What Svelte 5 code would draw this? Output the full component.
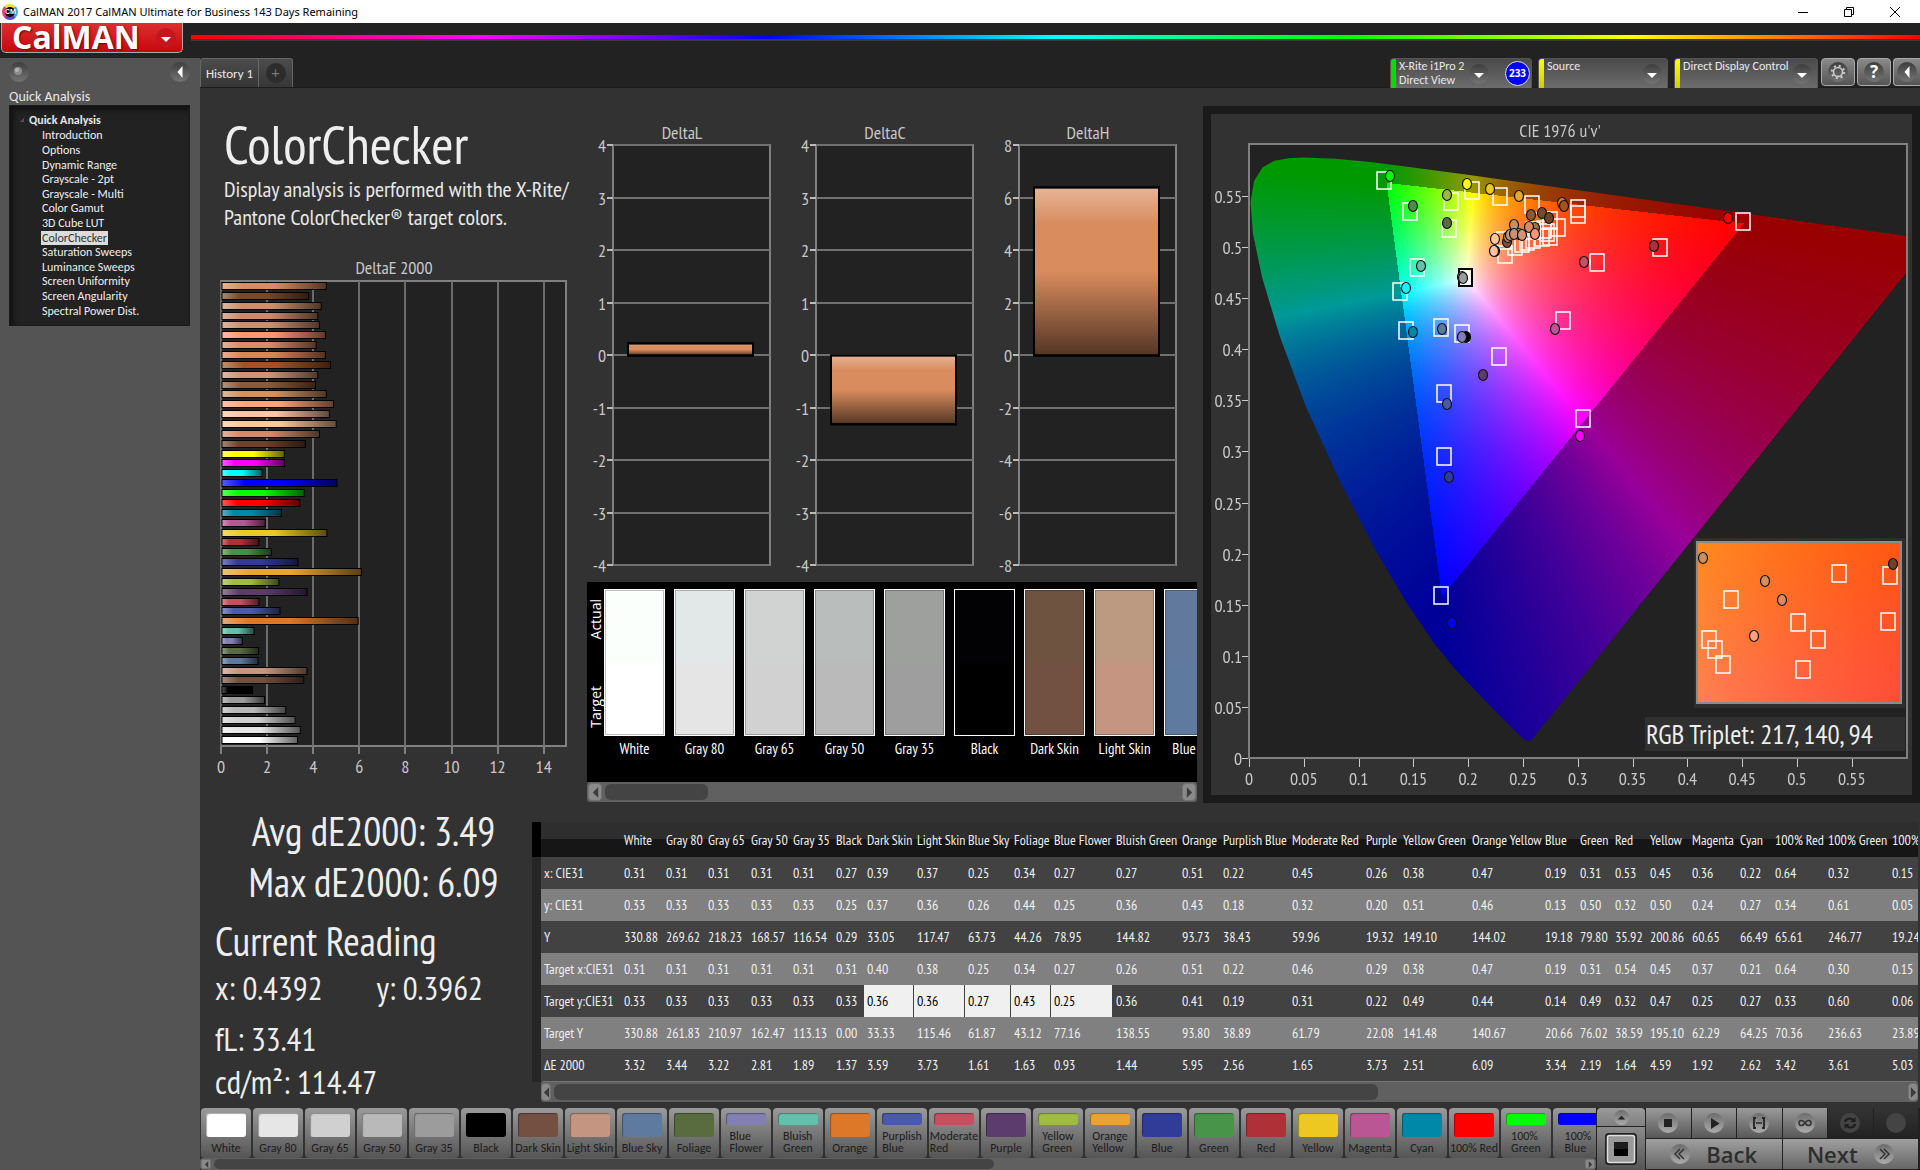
<script>
  import { onMount } from 'svelte';

  const pages = ['Introduction', 'Options', 'Dynamic Range', 'Grayscale - 2pt', 'Grayscale - Multi', 'Color Gamut', '3D Cube LUT', 'ColorChecker', 'Saturation Sweeps', 'Luminance Sweeps', 'Screen Uniformity', 'Screen Angularity', 'Spectral Power Dist.'];

  // DeltaE 2000 per patch, top to bottom: [value, colour]
  const deltaE = [
    [4.57, '#d98c5e'], [3.8, '#7a4a28'], [4.35, '#cc9068'], [4.2, '#cc8a6a'], [4.27, '#cd8f6e'], [4.53, '#ff9673'],
    [4.13, '#d88c6c'], [4.53, '#db8459'], [4.75, '#a2531f'], [4.2, '#d09474'], [4.1, '#8e5a34'], [4.57, '#cf9260'],
    [4.88, '#ffa47a'], [4.7, '#ffc3a5'], [5.0, '#ffc896'], [4.27, '#d08c66'], [3.66, '#70422a'], [2.75, '#ffff00'],
    [2.75, '#ff00ff'], [1.78, '#00ffff'], [5.03, '#0000ff'], [3.61, '#00ff00'], [3.42, '#ff0000'], [2.62, '#0088a8'],
    [1.92, '#bb5695'], [4.59, '#ecc820'], [1.64, '#b03038'], [2.19, '#489048'], [3.34, '#303c98'], [6.09, '#e8a430'],
    [2.51, '#a0bc40'], [3.73, '#5c3c6c'], [1.65, '#c45060'], [2.56, '#4a5ba5'], [5.95, '#dc7828'], [1.44, '#64c0aa'],
    [0.93, '#827fb3'], [1.63, '#586c40'], [1.61, '#5c7a9f'], [3.73, '#c69680'], [3.59, '#745040'], [1.37, '#000000'],
    [1.89, '#9c9c9c'], [2.81, '#b8b8b8'], [3.22, '#d0d0d0'], [3.44, '#e6e6e6'], [3.32, '#ffffff']
  ];

  const deltas = [
    { name: 'DeltaL', max: 4, value: 0.23 },
    { name: 'DeltaC', max: 4, value: -1.31 },
    { name: 'DeltaH', max: 8, value: 6.4 }
  ];

  const strips = [
    ['White', '#fbfffb', '#ffffff'], ['Gray 80', '#e2e8e8', '#e5e5e5'], ['Gray 65', '#d0d3d1', '#d1d1d1'],
    ['Gray 50', '#b9bdbb', '#bababa'], ['Gray 35', '#9ea09e', '#9e9e9e'], ['Black', '#020204', '#000000'],
    ['Dark Skin', '#6d5340', '#735142'], ['Light Skin', '#bc9a82', '#c49682'], ['Blue Sky', '#61799d', '#5e7a9e']
  ];

  const widths = [80, 42, 42, 43, 42, 43, 31, 50, 51, 46, 40, 62, 66, 41, 69, 74, 37, 69, 73, 35, 35, 35, 42, 48, 35, 53, 64, 60];
  const heads = ['White', 'Gray 80', 'Gray 65', 'Gray 50', 'Gray 35', 'Black', 'Dark Skin', 'Light Skin', 'Blue Sky', 'Foliage', 'Blue Flower', 'Bluish Green', 'Orange', 'Purplish Blue', 'Moderate Red', 'Purple', 'Yellow Green', 'Orange Yellow', 'Blue', 'Green', 'Red', 'Yellow', 'Magenta', 'Cyan', '100% Red', '100% Green', '100% Blue'];
  const rows = [
    ['x: CIE31', '0.31 0.31 0.31 0.31 0.31 0.27 0.39 0.37 0.25 0.34 0.27 0.27 0.51 0.22 0.45 0.26 0.38 0.47 0.19 0.31 0.53 0.45 0.36 0.22 0.64 0.32 0.15'],
    ['y: CIE31', '0.33 0.33 0.33 0.33 0.33 0.25 0.37 0.36 0.26 0.44 0.25 0.36 0.43 0.18 0.32 0.20 0.51 0.46 0.13 0.50 0.32 0.50 0.24 0.27 0.34 0.61 0.05'],
    ['Y', '330.88 269.62 218.23 168.57 116.54 0.29 33.05 117.47 63.73 44.26 78.95 144.82 93.73 38.43 59.96 19.32 149.10 144.02 19.18 79.80 35.92 200.86 60.65 66.49 65.61 246.77 19.24'],
    ['Target x:CIE31', '0.31 0.31 0.31 0.31 0.31 0.31 0.40 0.38 0.25 0.34 0.27 0.26 0.51 0.22 0.46 0.29 0.38 0.47 0.19 0.31 0.54 0.45 0.37 0.21 0.64 0.30 0.15'],
    ['Target y:CIE31', '0.33 0.33 0.33 0.33 0.33 0.33 0.36 0.36 0.27 0.43 0.25 0.36 0.41 0.19 0.31 0.22 0.49 0.44 0.14 0.49 0.32 0.47 0.25 0.27 0.33 0.60 0.06'],
    ['Target Y', '330.88 261.83 210.97 162.47 113.13 0.00 33.33 115.46 61.87 43.12 77.16 138.55 93.80 38.89 61.79 22.08 141.48 140.67 20.66 76.02 38.59 195.10 62.29 64.25 70.36 236.63 23.89'],
    ['ΔE 2000', '3.32 3.44 3.22 2.81 1.89 1.37 3.59 3.73 1.61 1.63 0.93 1.44 5.95 2.56 1.65 3.73 2.51 6.09 3.34 2.19 1.64 4.59 1.92 2.62 3.42 3.61 5.03']
  ].map(([label, text]) => ({ label, cells: text.split(' ') }));

  const patches = [
    ['White', '#ffffff'], ['Gray 80', '#e6e6e6'], ['Gray 65', '#d0d0d0'], ['Gray 50', '#b9b9b9'], ['Gray 35', '#9c9c9c'],
    ['Black', '#000000'], ['Dark Skin', '#735042'], ['Light Skin', '#c49682'], ['Blue Sky', '#5e7a9e'], ['Foliage', '#586c40'],
    ['Blue Flower', '#827fb3', 2], ['Bluish Green', '#64c0aa', 2], ['Orange', '#dc7828'], ['Purplish Blue', '#4a5ba5', 2],
    ['Moderate Red', '#c45060', 2], ['Purple', '#5c3c6c'], ['Yellow Green', '#a0bc40', 2], ['Orange Yellow', '#e8a430', 2],
    ['Blue', '#303c98'], ['Green', '#489448'], ['Red', '#b03038'], ['Yellow', '#ecc820'], ['Magenta', '#bb5695'],
    ['Cyan', '#0088a8'], ['100% Red', '#ff0000'], ['100% Green', '#00ff00', 2], ['100% Blue', '#0000ff', 2]
  ];

  // Chromaticity chart geometry: plot origin and pixels per u', v' unit
  const W = 701, H = 680, L = 38, T = 30, PW = 658, PH = 614;
  const SX = PW / 0.6, SY = PH / 0.6;
  const inset = { x: 486, y: 428, w: 204, h: 161, u0: 0.2425, u1: 0.279, v0: 0.4975, v1: 0.529 };
  const locus = [[.2569, .0165], [.2522, .0169], [.2461, .0226], [.2347, .035], [.2161, .0549], [.1877, .0871], [.169, .1119], [.1441, .151], [.1147, .2044], [.0828, .2708], [.0521, .3427], [.0282, .4117], [.0119, .4698], [.0035, .5131], [.0014, .5432], [.0046, .5638], [.0123, .577], [.0231, .5837], [.036, .5861], [.0501, .5868], [.0792, .5856], [.1127, .5821], [.1531, .5766], [.2026, .5694], [.2623, .5604], [.3315, .5501], [.4035, .5393], [.4692, .5296], [.5203, .5219], [.5565, .5165], [.583, .5125], [.6234, .5065]];

  const targets = [[135, 36], [223, 46], [202, 57], [251, 52], [161, 67], [200, 84], [283, 60], [329, 64], [329, 70], [494, 77], [411, 103], [348, 118], [168, 123], [151, 147], [157, 186], [192, 183], [213, 189], [314, 176], [250, 212], [195, 249], [195, 312], [334, 274], [192, 451],
    [301, 76], [309, 83], [301, 92], [295, 85], [298, 88], [293, 93], [284, 86], [284, 95], [278, 97], [273, 99], [266, 102], [256, 110], [255, 96]];
  const readings = [[141, 32, '#00ff00'], [218, 40, '#ffff00'], [241, 45, '#ecc820'], [270, 52, '#e8a430'], [198, 51, '#9cb840'], [164, 62, '#489048'], [198, 79, '#586c40'], [172, 122, '#64c0aa'], [157, 144, '#00ffff'], [164, 188, '#0088a8'], [193, 185, '#5c7a9f'], [217, 193, '#000000'], [213, 193, '#827fb3'], [306, 185, '#bb5695'], [234, 231, '#5c3c6c'], [198, 260, '#4a5ba5'], [200, 333, '#303c98'], [331, 292, '#ff00ff'], [335, 118, '#c45060'], [405, 102, '#b03038'], [479, 74, '#ff0000'], [203, 479, '#0000ff'], [213, 133, '#b9b9b9'], [214, 134, '#9c9c9c'],
    [282, 71, '#8e5a34'], [293, 69, '#7a4a28'], [300, 74, '#70422a'], [313, 59, '#dc7828'], [315, 62, '#a2531f'], [265, 81, '#c89060'], [286, 84, '#a8704c'], [280, 83, '#db8c5e'], [286, 90, '#ff9673'], [246, 95, '#ffc896'], [246, 107, '#c49682'], [245, 107, '#ffc3a5'], [258, 98, '#745042'], [259, 93, '#c08860'], [261, 91, '#c49682'], [270, 90, '#cc8a6a'], [265, 90, '#cd8f6e'], [273, 91, '#d09474']];
  const insetTargets = [[142, 31], [193, 33], [34, 57], [101, 80], [121, 97], [191, 79], [12, 97], [18, 107], [26, 122], [106, 127]];
  const insetReadings = [[6, 16, '#c89060'], [68, 39, '#d09060'], [85, 58, '#d98c5e'], [57, 94, '#ffa080'], [196, 22, '#70422a']];

  function rgb(u, v, level) {
    const d = 6 * u - 16 * v + 12;
    const x = (9 * u) / d, y = (4 * v) / d;
    const X = x / y, Z = (1 - x - y) / y;
    const c = [3.2406 * X - 1.5372 - 0.4986 * Z, -0.9689 * X + 1.8758 + 0.0415 * Z, 0.0557 * X - 0.204 + 1.057 * Z];
    const inside = c.every((n) => n >= 0);
    const m = Math.max(...c);
    return c.map((n) => (Math.max(0, n) / m) * 255 * (inside ? 1 : level));
  }

  let canvas;
  onMount(() => {
    const ctx = canvas.getContext('2d');
    const fill = (w, h, toUv) => {
      const buf = document.createElement('canvas');
      buf.width = w;
      buf.height = h;
      const b = buf.getContext('2d');
      const img = b.createImageData(w, h);
      for (let j = 0; j < h; j++)
        for (let i = 0; i < w; i++) {
          const [u, v] = toUv(i, j);
          const c = rgb(u, Math.max(v, 0.001), 0.6);
          const k = (j * w + i) * 4;
          img.data[k] = c[0];
          img.data[k + 1] = c[1];
          img.data[k + 2] = c[2];
          img.data[k + 3] = 255;
        }
      b.putImageData(img, 0, 0);
      return buf;
    };
    ctx.save();
    ctx.beginPath();
    ctx.rect(L, T, PW, PH);
    ctx.clip();
    ctx.beginPath();
    locus.forEach(([u, v], i) => {
      const x = L + u * SX, y = T + PH - v * SY;
      if (i) ctx.lineTo(x, y);
      else ctx.moveTo(x, y);
    });
    ctx.closePath();
    ctx.clip();
    ctx.drawImage(fill(PW, PH, (i, j) => [i / SX, 0.6 - j / SY]), L, T);
    ctx.restore();
    const n = inset;
    ctx.fillStyle = '#2e2e2e';
    ctx.fillRect(n.x - 3, n.y - 4, n.w + 7, n.h + 9);
    ctx.drawImage(fill(n.w, n.h, (i, j) => [n.u0 + ((n.u1 - n.u0) * i) / n.w, n.v1 - ((n.v1 - n.v0) * j) / n.h]), n.x, n.y);
  });
</script>

{#snippet chevron(dir)}
  <svg class="knob" viewBox="0 0 20 20" aria-hidden="true">
    <circle cx="10" cy="10" r="10" fill="url(#knob)" />
    {#if dir === 'down'}<path d="M5 9h10l-5 5z" fill="#fff" />{:else}<path d="M12.500 4v12L7.500 10z" fill="#fff" />{/if}
  </svg>
{/snippet}

{#snippet scrollbar(kind)}
  <div class="scroll {kind}">
    <button class="arrow" aria-label="Scroll left"><svg viewBox="0 0 8 12"><path d="M7 0v12L1 6z" fill="#3c3c3c" /></svg></button>
    <div class="track"><div class="thumb"></div></div>
    <button class="arrow" aria-label="Scroll right"><svg viewBox="0 0 8 12"><path d="M1 0v12l6-6z" fill="#3c3c3c" /></svg></button>
  </div>
{/snippet}

<svg class="defs" width="0" height="0" aria-hidden="true">
  <defs>
    <linearGradient id="knob" x1="0" y1="0" x2="0" y2="1"><stop offset="0" stop-color="#3e3e3e" /><stop offset="1" stop-color="#747474" /></linearGradient>
    <linearGradient id="knobLight" x1="0" y1="0" x2="0" y2="1"><stop offset="0" stop-color="#6c6c6c" /><stop offset="1" stop-color="#acacac" /></linearGradient>
    <linearGradient id="shadeX"><stop offset="0" stop-color="#fff" stop-opacity=".35" /><stop offset=".2" stop-color="#fff" stop-opacity="0" /><stop offset=".5" stop-color="#000" stop-opacity="0" /><stop offset="1" stop-color="#000" stop-opacity=".62" /></linearGradient>
    <linearGradient id="shadeY" x1="0" y1="0" x2="0" y2="1"><stop offset="0" stop-color="#fff" stop-opacity=".35" /><stop offset=".22" stop-color="#fff" stop-opacity="0" /><stop offset=".5" stop-color="#000" stop-opacity="0" /><stop offset="1" stop-color="#000" stop-opacity=".62" /></linearGradient>
  </defs>
</svg>

<div class="app">
  <header class="titlebar">
    <div class="badge">CM</div>
    <span>CalMAN 2017 CalMAN Ultimate for Business 143 Days Remaining</span>
    <div class="winctl">
      <button aria-label="Minimize"><svg viewBox="0 0 12 12"><path d="M1 6.500h10" /></svg></button>
      <button aria-label="Restore"><svg viewBox="0 0 12 12"><path d="M1.500 3.500h7v7h-7zM3.500 3.500v-2h7v7h-2" /></svg></button>
      <button aria-label="Close"><svg viewBox="0 0 12 12"><path d="M1 1l10 10M11 1L1 11" /></svg></button>
    </div>
  </header>

  <div class="brandbar">
    <button class="logo"><span>CalMAN</span><svg viewBox="0 0 20 20" aria-hidden="true"><circle cx="10" cy="10" r="10" fill="#c4161c" /><path d="M5 9h10l-5 5z" fill="#fff" /></svg></button>
    <div class="rainbow"></div>
  </div>

  <div class="body">
    <aside>
      <div class="asidetop">
        <svg class="knob" viewBox="0 0 20 20" aria-hidden="true"><circle cx="10" cy="10" r="10" fill="url(#knob)" /><circle cx="9" cy="9" r="4" fill="#8c8c8c" /><circle cx="8" cy="8" r="2" fill="#b4b4b4" /></svg>
        <button class="plain" aria-label="Collapse">{@render chevron('left')}</button>
      </div>
      <h2>Quick Analysis</h2>
      <nav>
        <p><svg viewBox="0 0 6 6" aria-hidden="true"><path d="M5 1v4H1z" fill="#555" /></svg>Quick Analysis</p>
        <ul>
          {#each pages as page}
            <li><a href="#page" class:current={page === 'ColorChecker'}>{page}</a></li>
          {/each}
        </ul>
      </nav>
    </aside>

    <main>
      <div class="tabs">
        <button class="tab">History 1</button>
        <button class="tab add" aria-label="Add history"><span>+</span></button>
        <div class="devices">
          <button class="device meter"><i class="green"></i><span>X-Rite i1Pro 2<br />Direct View</span>{@render chevron('down')}<b>233</b></button>
          <button class="device source"><i></i><span>Source</span>{@render chevron('down')}</button>
          <button class="device display"><i></i><span>Direct Display Control</span>{@render chevron('down')}</button>
          <button class="tool" aria-label="Settings"><svg viewBox="0 0 20 20"><circle cx="10" cy="10" r="10" fill="url(#knob)" /><circle cx="10" cy="10" r="4.500" fill="none" stroke="#ccc" stroke-width="1.600" /><circle cx="10" cy="10" r="6.200" fill="none" stroke="#ccc" stroke-width="2" stroke-dasharray="2 2.870" /></svg></button>
          <button class="tool help" aria-label="Help"><span>?</span></button>
          <button class="tool last" aria-label="Collapse panel">{@render chevron('left')}</button>
        </div>
      </div>

      <div class="content">
        <section class="left">
          <h1>ColorChecker</h1>
          <p class="lead">Display analysis is performed with the X-Rite/<br />Pantone ColorChecker® target colors.</p>
          <svg class="chart" width="387" height="530" viewBox="0 0 387 530">
            <text x="194" y="24" text-anchor="middle">DeltaE 2000</text>
            <rect x="21" y="31" width="345" height="465" fill="#222" stroke="#808080" stroke-width="2" />
            {#each [0, 2, 4, 6, 8, 10, 12, 14] as t}
              <path d="M{Math.round(21 + t * 23.05)} 31V496" stroke="#6c6c6c" stroke-width="2" />
              <path d="M{Math.round(21 + t * 23.05)} 497v7" stroke="#ccc" />
              <text x={21 + t * 23.05} y="523" text-anchor="middle">{t}</text>
            {/each}
            {#each deltaE as [v, c], i}
              <rect x="22" y={32.5 + Math.round(i * 9.86)} width={v * 23.05 - 1} height="7" fill={c} />
              <rect x="22" y={32.5 + Math.round(i * 9.86)} width={v * 23.05 - 1} height="7" fill="url(#shadeX)" stroke="#000" />
            {/each}
          </svg>
        </section>

        <section class="mid">
          <div class="deltas">
            {#each deltas as d}
              <svg class="chart" width="203" height="462" viewBox="0 0 203 462">
                <text x="95" y="19" text-anchor="middle">{d.name}</text>
                <rect x="26" y="25" width="157" height="420" fill="#222" stroke="#808080" stroke-width="2" />
                {#each [4, 3, 2, 1, 0, -1, -2, -3, -4] as t}
                  <path d="M26 {Math.round(235 - t * 52.5)}H183" stroke="#707070" stroke-width="2" />
                  <path d="M20 {Math.round(235 - t * 52.5)}h6" stroke="#bbb" stroke-width="2" />
                  <text x="19" y={242 - t * 52.5} text-anchor="end">{(t * d.max) / 4}</text>
                {/each}
                {#each ['#d98c5e', 'url(#shadeY)'] as f}
                  <rect x="41" y={235.5 - (Math.max(d.value, 0) * 210) / d.max} width="125" height={(Math.abs(d.value) * 210) / d.max} fill={f} stroke="#000" stroke-width="2" />
                {/each}
              </svg>
            {/each}
          </div>
          <div class="strips">
            <div class="side"><span>Actual</span><span>Target</span></div>
            {#each strips as [name, actual, target]}
              <figure>
                <svg width="61" height="147" aria-hidden="true"><rect width="61" height="74" fill={actual} /><rect y="74" width="61" height="73" fill={target} /><rect x="1.500" y="1.500" width="58" height="144" fill="none" stroke="#000" stroke-opacity=".25" /><rect x=".5" y=".5" width="60" height="146" fill="none" stroke="#fff" /></svg>
                <figcaption>{name}</figcaption>
              </figure>
            {/each}
          </div>
          {@render scrollbar('stripbar')}
        </section>

        <section class="cie">
          <canvas bind:this={canvas} width={W} height={H}></canvas>
          <svg class="chart" width={W} height={H} viewBox="0 0 {W} {H}">
            <text x="349" y="23" text-anchor="middle">CIE 1976 u'v'</text>
            <rect x={L} y={T} width={PW} height={PH} fill="none" stroke="#808080" stroke-width="2" />
            {#each Array.from({ length: 12 }, (_, i) => i) as i}
              <path d="M{L - 7} {Math.round(T + PH - i * 51.1) + 0.5}h6M{Math.round(L + i * 54.8) + 0.5} {T + PH + 1}v8" stroke="#ccc" />
              <text x={L - 7} y={T + PH + 7 - i * 51.1} text-anchor="end">{+(i * 0.05).toFixed(2)}</text>
              <text x={L + i * 54.8} y="671" text-anchor="middle">{+(i * 0.05).toFixed(2)}</text>
            {/each}
            <g transform="translate({L} {T})">
              {#each targets as [x, y]}<rect class="target" x={x - 7} y={y - 8} width="14" height="17" />{/each}
              <rect class="target white" x="210" y="125" width="13" height="17" />
              {#each readings as [x, y, c]}<ellipse cx={x} cy={y} rx="4.500" ry="5.500" fill={c} stroke="#111" stroke-width="1.200" />{/each}
            </g>
            <rect x={inset.x} y={inset.y} width={inset.w} height={inset.h} fill="none" stroke="#8c8c8c" stroke-width="2" />
            <g transform="translate({inset.x} {inset.y})">
              {#each insetTargets as [x, y]}<rect class="target" x={x - 7} y={y - 8} width="14" height="17" />{/each}
              {#each insetReadings as [x, y, c]}<ellipse cx={x} cy={y} rx="4.500" ry="5.500" fill={c} stroke="#111" stroke-width="1.200" />{/each}
            </g>
            <rect x="434" y="603" width="260" height="34" fill="#303030" />
            <text class="triplet" x="435" y="630">RGB Triplet: 217, 140, 94</text>
          </svg>
        </section>
      </div>

      <div class="lower">
        <section class="stats">
          <p class="big">Avg dE2000: 3.49</p>
          <p class="big">Max dE2000: 6.09</p>
          <p class="reading">Current Reading</p>
          <p class="xy"><span>x: 0.4392</span><span>y: 0.3962</span></p>
          <p class="fl">fL: 33.41</p>
          <p class="cd">cd/m²: 114.47</p>
        </section>
        <section class="grid">
          <div class="rowheads"></div>
          <div class="tablebox">
            <div class="clip">
              <table>
                <colgroup>{#each widths as w}<col style="width:{w}px" />{/each}</colgroup>
                <thead><tr><th></th>{#each heads as h}<th scope="col">{h}</th>{/each}</tr></thead>
                <tbody>
                  {#each rows as row, r}
                    <tr><th scope="row">{row.label}</th>{#each row.cells as cell, i}<td class:sel={r === 4 && i > 5 && i < 11}>{cell}</td>{/each}</tr>
                  {/each}
                </tbody>
              </table>
            </div>
            {@render scrollbar('tablebar')}
          </div>
        </section>
      </div>

      <footer>
        <div class="palette">
          <div class="patches">
            {#each patches as [name, color, lines]}
              <button class="patch" class:two={lines === 2}><i style="background:{color}"></i><span>{name}</span></button>
            {/each}
          </div>
          {@render scrollbar('patchbar')}
        </div>
        <div class="window">
          <button aria-label="Expand"><svg viewBox="0 0 16 16"><circle cx="8" cy="8" r="8" fill="url(#knobLight)" /><path d="M4 10h8L8 6z" fill="#222" /></svg></button>
          <button class="rec" aria-label="Pattern window"><svg viewBox="0 0 32 32"><rect width="32" height="32" rx="4" fill="#222" /><rect x="2.500" y="2.500" width="27" height="27" rx="2" fill="#999" stroke="#e0e0e0" stroke-width="1.500" /><rect x="9" y="9" width="14" height="14" fill="#000" /><rect x="9" y="9" width="14" height="7" fill="#1c1c1c" /></svg></button>
        </div>
        <div class="transport">
          <div class="keys">
            <button aria-label="Stop"><svg viewBox="0 0 20 20"><circle cx="10" cy="10" r="10" fill="url(#knobLight)" /><path d="M6 6h8v8H6z" fill="#222" /></svg></button>
            <button aria-label="Play"><svg viewBox="0 0 20 20"><circle cx="10" cy="10" r="10" fill="url(#knobLight)" /><path d="M7 5l8.500 5.500L7 16z" fill="#222" /></svg></button>
            <button aria-label="Read range"><svg viewBox="0 0 20 20"><circle cx="10" cy="10" r="10" fill="url(#knobLight)" /><path d="M7 5H5v10h2M13 5h2v10h-2" fill="none" stroke="#222" stroke-width="1.800" /><path d="M7.200 9h1.400v2H7.200zM9.300 9h1.400v2H9.300zM11.400 9h1.400v2h-1.400z" fill="#222" /></svg></button>
            <button aria-label="Continuous"><svg viewBox="0 0 20 20"><circle cx="10" cy="10" r="10" fill="url(#knobLight)" /><path d="M10 10C8 7 4 6.500 4 10s4 3 6 0 6-3.500 6 0-4 3-6 0z" fill="none" stroke="#333" stroke-width="1.600" /></svg></button>
            <button class="off" aria-label="Refresh"><svg viewBox="0 0 20 20"><circle cx="10" cy="10" r="10" fill="#444" /><path d="M5 9c.5-3 5-5 8-2M15 11c-.5 3-5 5-8 2" fill="none" stroke="#1c1c1c" stroke-width="2.200" /><path d="M15.500 4v5h-5zM4.500 16v-5h5z" fill="#1c1c1c" /></svg></button>
            <button class="off" aria-label="Record"><svg viewBox="0 0 20 20"><circle cx="10" cy="10" r="10" fill="#444" /></svg></button>
          </div>
          <div class="nav">
            <button><svg viewBox="0 0 20 20" aria-hidden="true"><circle cx="10" cy="10" r="10" fill="url(#knobLight)" /><path d="M10 5l-5 5 5 5M14 5l-5 5 5 5" fill="none" stroke="#333" stroke-width="1.500" /></svg>Back</button>
            <button>Next<svg viewBox="0 0 20 20" aria-hidden="true"><circle cx="10" cy="10" r="10" fill="url(#knobLight)" /><path d="M6 5l5 5-5 5M10 5l5 5-5 5" fill="none" stroke="#333" stroke-width="1.500" /></svg></button>
          </div>
        </div>
      </footer>
    </main>
  </div>
</div>

<style>
  :global(body) { margin: 0; background: #222; }
  .app { --ui: Carlito, Calibri, Lato, sans-serif; --cond: 'PT Sans Narrow', 'Roboto Condensed', Carlito, sans-serif; min-height: 100vh; display: flex; flex-direction: column; background: #222; color: #e8e8e8; font-family: var(--ui); font-size: 12px; overflow: hidden; }
  .defs { position: absolute; }
  button { border: 0; padding: 0; margin: 0; background: none; font: inherit; color: inherit; }
  h1, h2, p, ul, figure { margin: 0; padding: 0; font-weight: 400; }
  .titlebar { height: 23px; background: #fff; color: #000; display: flex; align-items: center; gap: 5px; padding-left: 2px; font: 11px/23px 'Noto Sans', 'Open Sans', sans-serif; }
  .badge { width: 10px; height: 10px; border: 3px solid; border-color: #e8e040 #40b0e0 #7040d0 #e04080; border-radius: 50%; background: #000; color: #fff; font: 700 7px/10px 'Liberation Sans', sans-serif; text-align: center; }
  .winctl { margin-left: auto; display: flex; gap: 34px; padding-right: 19px; }
  .winctl svg { width: 12px; height: 12px; display: block; fill: none; stroke: #000; }
  .brandbar { height: 35px; display: flex; gap: 8px; }
  .logo { width: 182px; height: 30px; box-sizing: border-box; border: 1px solid #aaa; border-top: 0; border-radius: 0 0 5px 5px; background: linear-gradient(#dc3030, #c8060c); display: flex; align-items: center; padding-left: 10px; color: #fff; font: 700 32px/28px 'Open Sans', Lato, sans-serif; text-shadow: 1px 1px 2px #600; margin-left: 1px; }
  .logo span { height: 30px; line-height: 28px; }
  .logo svg { width: 20px; height: 20px; margin-left: auto; margin-right: 6px; }
  .rainbow { flex: 1; height: 4px; margin-top: 12px; border-bottom: 2px solid #3a3a3a; background: linear-gradient(90deg, #f00, #f0f, #00f, #0ff, #0f0, #ff0, #f00); }
  .body { flex: 1; display: flex; }
  aside { width: 200px; box-sizing: border-box; padding: 4px 10px 0 9px; background: #545454; }
  .asidetop { display: flex; justify-content: space-between; height: 20px; }
  .knob { width: 20px; height: 20px; display: block; flex: none; }
  h2 { font-size: 14px; line-height: 18px; padding-top: 6px; height: 17px; }
  nav { height: 221px; box-sizing: border-box; background: #222; border: 1px solid #1a1a1a; box-shadow: inset 3px 4px 5px #111; padding-top: 6px; }
  nav p { display: flex; align-items: center; gap: 4px; padding-left: 9px; font-weight: 700; line-height: 14px; height: 16px; }
  nav svg { width: 6px; height: 6px; }
  ul { list-style: none; display: grid; grid-auto-rows: 1fr; height: 190px; padding-left: 31px; }
  li { line-height: 14px; display: flex; align-items: center; }
  li a { color: #eee; text-decoration: none; padding: 0 1px; font-size: 12px; }
  li a.current { background: #dcdcdc; color: #333; }
  main { flex: 1; min-width: 0; background: #323232; display: flex; flex-direction: column; }
  .tabs { height: 30px; display: flex; background: #222; border-bottom: 1px solid #1c1c1c; box-sizing: border-box; }
  .tab { width: 59px; border: 1px solid #666; border-bottom: 0; background: linear-gradient(#4c4c4c, #363636); font-size: 13px; border-radius: 3px 0 0 0; white-space: nowrap; }
  .tab.add { width: 34px; border-left: 0; border-radius: 0 3px 0 0; }
  .tab.add span { display: inline-block; width: 20px; height: 20px; line-height: 20px; border-radius: 50%; background: #2c2c2c; color: #777; font-size: 16px; }
  .devices { margin-left: auto; display: flex; height: 30px; }
  .device { box-sizing: border-box; display: flex; align-items: center; margin-right: 6px; background: linear-gradient(#4a4a4a, #6c6c6c); border: 1px solid #555; border-bottom: 0; border-radius: 4px 4px 0 0; text-align: left; line-height: 14px; white-space: nowrap; overflow: hidden; }
  .device i { width: 5px; height: 30px; background: linear-gradient(#ff0, #cc0); margin-right: 3px; flex: none; }
  .device i.green { background: #00e000; }
  .device span { align-self: flex-start; flex: 1; }
  .meter { width: 142px; }
  .meter b { width: 25px; height: 25px; margin: 0 1px 0 16px; box-sizing: border-box; border: 1px solid #ddd; border-radius: 50%; background: #00f; font: 700 10px/23px 'Open Sans', sans-serif; text-align: center; color: #fff; }
  .source { width: 130px; padding-right: 5px; }
  .display { width: 144px; padding-right: 5px; margin-right: 3px; }
  .tool { width: 34px; height: 28px; box-sizing: border-box; margin-right: 2px; border: 1px solid #aaa; border-radius: 4px; background: linear-gradient(#8a8a8a, #555); display: grid; place-items: center; }
  .tool svg { width: 20px; height: 20px; }
  .tool.help span { width: 20px; height: 20px; border-radius: 50%; background: linear-gradient(#3e3e3e, #747474); font: 700 17px/20px 'Open Sans', sans-serif; color: #fff; }
  .tool.last { width: 27px; margin-right: 0; border-right: 0; border-radius: 4px 0 0 4px; }
  .content { display: flex; }
  .left { width: 387px; }
  h1 { font: 400 54px/56px var(--cond); padding: 28px 0 0 24px; color: #eee; }
  .lead { font: 22px/28px var(--cond); padding: 3px 0 0 24px; white-space: nowrap; margin-bottom: 19px; }
  .chart { display: block; font: 18px var(--cond); fill: none; }
  .chart text { fill: #c8c8c8; }
  .mid { width: 610px; padding-top: 32px; }
  .deltas { display: flex; }
  .strips { height: 200px; box-sizing: border-box; padding-top: 7px; background: #000; display: flex; gap: 9px; overflow: hidden; }
  .side { width: 17px; height: 147px; margin-right: -9px; display: flex; flex-direction: column; justify-content: space-between; padding: 10px 0 8px; box-sizing: border-box; flex: none; }
  .side span { writing-mode: vertical-rl; transform: rotate(180deg); font: 14px/17px 'Open Sans', sans-serif; color: #fff; }
  .strips figure { width: 61px; flex: none; display: flex; flex-direction: column; align-items: center; }
  figcaption { font: 15px/25px var(--cond); white-space: nowrap; color: #fff; }
  .scroll { display: flex; align-items: stretch; background: #606060; box-sizing: border-box; border-radius: 3px; gap: 3px; }
  .arrow { width: 14px; flex: none; border: 1px solid #727272; border-radius: 4px; background: #8a8a8a; display: grid; place-items: center; }
  .arrow svg { width: 7px; height: 11px; display: block; }
  .track { flex: 1; padding: 1px 0; display: flex; }
  .thumb { background: #444; border-radius: 6px; }
  .stripbar { height: 20px; padding: 1px; }
  .stripbar .thumb { width: 18%; }
  .tablebar { height: 21px; padding: 1px 0; border-top: 1px solid #757575; }
  .tablebar .arrow { width: 10px; }
  .tablebar .thumb { width: 61%; }
  .patchbar { height: 12px; padding: 1px; }
  .patchbar .arrow { width: 10px; border-radius: 2px; }
  .patchbar .track { padding: 0; }
  .patchbar .thumb { width: 57%; }
  .patchbar svg { height: 7px; }
  .cie { margin: 18px 0 0 6px; flex: 1; box-sizing: border-box; height: 697px; border: 8px solid #1a1a1a; background: #323232; display: grid; overflow: hidden; }
  .cie > * { grid-area: 1 / 1; }
  .cie canvas { display: block; background: linear-gradient(#222, #222) 38px 30px / 658px 614px no-repeat; }
  .target { stroke: #fff; stroke-width: 1.500; fill: none; }
  .target.white { stroke: #000; stroke-width: 2; fill: #ffffff80; }
  .chart .triplet { font-size: 27px; fill: #eee; }
  .lower { display: flex; margin-top: auto; }
  .stats { width: 332px; flex: none; font: 33px/40px var(--cond); box-sizing: border-box; padding-left: 15px; height: 296px; margin-top: -16px; color: #eee; }
  .stats .big { font-size: 40px; line-height: 51px; text-align: center; }
  .stats .reading { font-size: 40px; line-height: 50px; margin-top: 8px; }
  .xy { display: flex; gap: 54px; line-height: 44px; }
  .fl { margin-top: 9px; }
  .cd { margin-top: 3px; }
  .grid { flex: 1; min-width: 0; display: flex; padding-right: 2px; }
  .rowheads { width: 9px; background: linear-gradient(#000 35px, #262626 35px); height: 260px; }
  .tablebox { flex: 1; min-width: 0; }
  .clip { overflow: hidden; }
  table { table-layout: fixed; width: 1383px; border-collapse: collapse; font: 14px/20px var(--cond); white-space: nowrap; color: #f0f0f0; }
  thead tr { height: 35px; background: linear-gradient(#2e2e2e 50%, #161616 50%); }
  tbody tr { height: 32px; background: #424242; }
  tbody tr:nth-child(even) { background: #808080; }
  th, td { padding: 0 0 0 3px; text-align: left; font-weight: 400; }
  td.sel { background: #f0f0f0; color: #000; box-shadow: inset -1px 0 #424242; }
  footer { display: flex; height: 62px; margin-top: 6px; background: #222; gap: 1px; }
  .palette { flex: 1; min-width: 0; }
  .patches { display: flex; gap: 2px; overflow: hidden; height: 50px; padding-left: 1px; background: #323232; }
  .patch { width: 50px; height: 50px; flex: none; box-sizing: border-box; padding: 5px 0 0; border-radius: 4px; background: linear-gradient(#9a9a9a, #555); color: #1c1c1c; font-size: 12px; line-height: 12px; display: flex; flex-direction: column; align-items: center; text-align: left; }
  .patch i { width: 40px; height: 24px; border-radius: 3px; box-shadow: inset 1px 1px 1px #0005; flex: none; }
  .patch span { margin-top: 5px; white-space: nowrap; }
  .patch.two i { height: 12px; }
  .patch.two span { white-space: normal; width: min-content; margin-top: 5px; line-height: 12px; }
  .window { width: 48px; display: grid; grid-template-rows: 18px 1fr; gap: 1px; }
  .window button { background: linear-gradient(#9a9a9a, #808080); border-radius: 4px 4px 0 0; display: grid; place-items: center; }
  .window svg { width: 15px; height: 15px; display: block; }
  .window .rec { background: linear-gradient(#8a8a8a, #555); border-radius: 0; }
  .window .rec svg { width: 32px; height: 32px; }
  .transport { width: 272px; margin-right: 2px; display: grid; grid-template-rows: 30px 30px; gap: 1px; }
  .keys { display: grid; grid-template-columns: repeat(6, 1fr); gap: 1px; }
  .nav { display: grid; grid-template-columns: 1fr 1fr; gap: 1px; }
  .keys button, .nav button { background: linear-gradient(#9a9a9a, #585858); display: flex; align-items: center; justify-content: center; }
  .keys button.off { background: linear-gradient(#333, #222); }
  .keys svg, .nav svg { width: 20px; height: 20px; display: block; }
  .nav button { background: linear-gradient(#a0a0a0, #666); color: #2e2e2e; font: 600 22px/28px 'Open Sans', sans-serif; gap: 16px; }
</style>
